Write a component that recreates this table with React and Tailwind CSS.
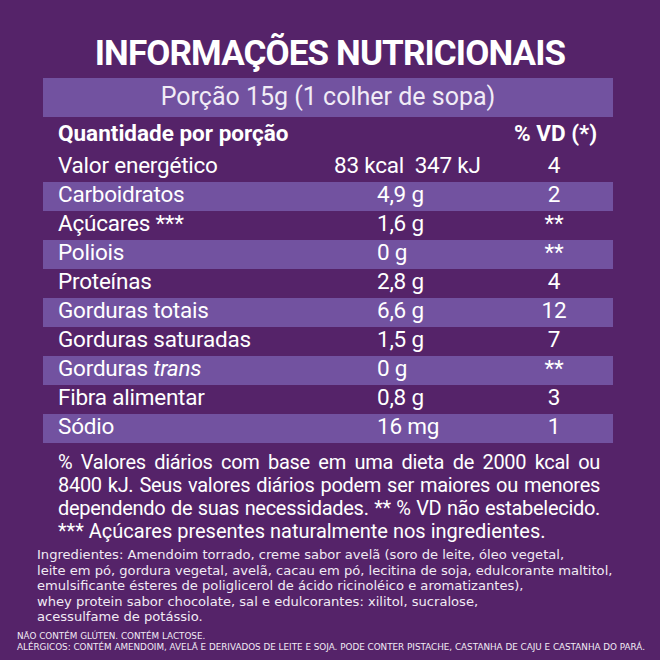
/**
 * Nutrition facts panel
 * Purple label with banded rows, footnotes and ingredient list
 */

const rows = [
  { label: "Valor energético", value: "83 kcal  347 kJ", vd: "4", wide: true },
  { label: "Carboidratos", value: "4,9 g", vd: "2" },
  { label: "Açúcares ***", value: "1,6 g", vd: "**" },
  { label: "Poliois", value: "0 g", vd: "**" },
  { label: "Proteínas", value: "2,8 g", vd: "4" },
  { label: "Gorduras totais", value: "6,6 g", vd: "12" },
  { label: "Gorduras saturadas", value: "1,5 g", vd: "7" },
  { label: "Gorduras", italic: "trans", value: "0 g", vd: "**" },
  { label: "Fibra alimentar", value: "0,8 g", vd: "3" },
  { label: "Sódio", value: "16 mg", vd: "1" },
];

const notes = [
  "% Valores diários com base em uma dieta de 2000 kcal ou",
  "8400 kJ. Seus valores diários podem ser maiores ou menores",
  "dependendo de suas necessidades. ** % VD não estabelecido.",
];

const Row = ({ row, band }) => {
  return (
    <div
      className={`flex h-[29px] items-start text-[22.5px] leading-[25px] tracking-[-0.01em] ${
        band ? "bg-[#7252a0]" : ""
      }`}
    >
      <div className="w-[291px] pl-[15px] whitespace-nowrap">
        {row.label}
        {row.italic && <span className="italic"> {row.italic}</span>}
      </div>
      <div
        className={`w-[180px] whitespace-pre ${row.wide ? "pl-0" : "pl-[43px]"}`}
      >
        {row.value}
      </div>
      <div className="w-[80px] text-center">{row.vd}</div>
    </div>
  );
};

export default function App() {
  return (
    <div className="w-[660px] h-[660px] overflow-hidden bg-[#552369] text-white font-['Roboto',sans-serif]">
      <h1 className="pt-[36px] text-center text-[35px] leading-[36px] font-bold tracking-[-0.025em]">
        INFORMAÇÕES NUTRICIONAIS
      </h1>

      <div className="ml-[43px] w-[570px]">
        <div className="mt-[6px] h-[39px] bg-[#7252a0] text-center text-[25px] leading-[37px] text-[#f1ecf6]">
          Porção 15g (1 colher de sopa)
        </div>

        <div className="flex h-[36px] items-start text-[22.5px] leading-[32px] font-bold">
          <div className="w-[471px] pl-[15px]">Quantidade por porção</div>
          <div className="w-[80px] text-center whitespace-nowrap">% VD (*)</div>
        </div>

        {rows.map((row, i) => (
          <Row key={row.label + i} row={row} band={i % 2 === 1} />
        ))}

        <div className="mt-[8px] ml-[15px] w-[542px] text-[20px] leading-[23px]">
          {notes.map((line) => (
            <div
              key={line}
              className="whitespace-nowrap tracking-[-0.015em] text-justify [text-align-last:justify]"
            >
              {line}
            </div>
          ))}
          <div className="whitespace-nowrap">
            *** Açúcares presentes naturalmente nos ingredientes.
          </div>
        </div>
      </div>

      <div className="mt-[4px] ml-[37px] whitespace-nowrap font-['DejaVu_Sans',sans-serif] text-[13.1px] leading-[15.6px] text-[#f1eaf4]">
        Ingredientes: Amendoim torrado, creme sabor avelã (soro de leite, óleo vegetal,
        <br />
        leite em pó, gordura vegetal, avelã, cacau em pó, lecitina de soja, edulcorante maltitol,
        <br />
        emulsificante ésteres de poliglicerol de ácido ricinoléico e aromatizantes),
        <br />
        whey protein sabor chocolate, sal e edulcorantes: xilitol, sucralose,
        <br />
        acessulfame de potássio.
      </div>

      <div className="mt-[6px] ml-[17px] whitespace-nowrap font-['DejaVu_Sans',sans-serif] text-[8.8px] leading-[11px] text-[#f1eaf4]">
        NÃO CONTÉM GLÚTEN. CONTÉM LACTOSE.
        <br />
        ALÉRGICOS: CONTÉM AMENDOIM, AVELÃ E DERIVADOS DE LEITE E SOJA. PODE CONTER PISTACHE, CASTANHA DE CAJU E CASTANHA DO PARÁ.
      </div>
    </div>
  );
}
